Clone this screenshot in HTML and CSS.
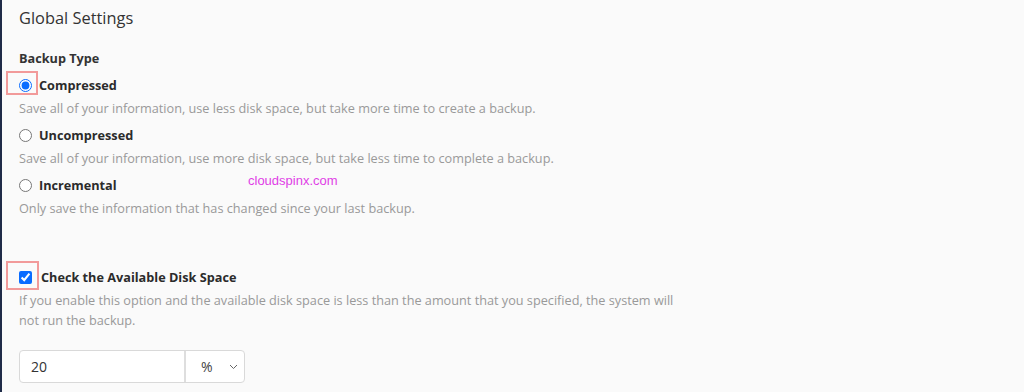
FILE: index.html
```html
<!DOCTYPE html>
<html>
<head>
<meta charset="utf-8">
<link rel="stylesheet" href="styles.css">
</head>
<body>
<div class="page">
  <h1 class="title">Global Settings</h1>
  <div class="group-label">Backup Type</div>

  <label class="opt">
    <span class="mark-box"></span>
    <input type="radio" name="bt" checked>
    <span class="opt-text">Compressed</span>
  </label>
  <div class="desc">Save all of your information, use less disk space, but take more time to create a backup.</div>

  <label class="opt">
    <input type="radio" name="bt">
    <span class="opt-text">Uncompressed</span>
  </label>
  <div class="desc">Save all of your information, use more disk space, but take less time to complete a backup.</div>

  <label class="opt">
    <input type="radio" name="bt">
    <span class="opt-text">Incremental</span>
    <span class="watermark">cloudspinx.com</span>
  </label>
  <div class="desc">Only save the information that has changed since your last backup.</div>

  <label class="opt check">
    <span class="mark-box wide"></span>
    <input type="checkbox" checked>
    <span class="opt-text">Check the Available Disk Space</span>
  </label>
  <div class="desc narrow">If you enable this option and the available disk space is less than the amount that you specified, the system will not run the backup.</div>

  <div class="input-group">
    <input class="num" type="text" value="20">
    <div class="unit">
      <span>%</span>
      <svg class="chev" width="9" height="6" viewBox="0 0 9 6"><path d="M1 1l3.5 3.5L8 1" fill="none" stroke="#666" stroke-width="1"/></svg>
    </div>
  </div>
</div>
</body>
</html>
```

FILE: styles.css
```css
html, body {
  margin: 0;
  padding: 0;
}
body {
  background: #fafafa;
  border-left: 2px solid #1f2b48;
  min-height: 392px;
  box-sizing: border-box;
  font-family: "Open Sans", "Noto Sans", sans-serif;
  color: #333;
}
.page {
  padding: 6px 0 0 17px;
}
.title {
  margin: 0;
  font-size: 16.4px;
  font-weight: 400;
  line-height: 24px;
  color: #333;
}
.group-label {
  margin-top: 18px;
  font-size: 12.7px;
  font-weight: 700;
  line-height: 20px;
  color: #333;
}
.opt {
  position: relative;
  display: flex;
  align-items: center;
  height: 24px;
  margin-top: 5px;
}
.opt input {
  margin: 0;
  width: 13px;
  height: 13px;
  accent-color: #0a6cff;
}
.opt-text {
  margin-left: 7px;
  font-size: 12.7px;
  font-weight: 700;
  color: #2b2b2b;
}
.check .opt-text {
  margin-left: 9px;
}
.mark-box {
  position: absolute;
  left: -13px;
  top: -2px;
  width: 32px;
  height: 24px;
  box-sizing: border-box;
  border: 2px solid #f29a9a;
  pointer-events: none;
}
.mark-box.wide {
  top: -4px;
  width: 33px;
  height: 29px;
}
.desc {
  font-size: 12.7px;
  line-height: 20px;
  color: #999;
  margin-top: 1px;
}
.check {
  margin-top: 47px;
}
.narrow {
  width: 670px;
}
.watermark {
  position: absolute;
  left: 229px;
  top: 0px;
  font-family: "Liberation Sans", Arial, sans-serif;
  font-size: 13px;
  color: #e03ee6;
}
.input-group {
  display: flex;
  margin-top: 20px;
  width: 226px;
  height: 33px;
  border: 1px solid #d9d9d9;
  border-radius: 4px;
  box-sizing: border-box;
  background: #fff;
}
.num {
  width: 166px;
  border: none;
  border-right: 2px solid #dedede;
  outline: none;
  padding: 0 0 0 11px;
  font-family: "Open Sans", sans-serif;
  font-size: 14px;
  color: #333;
  background: transparent;
  box-sizing: border-box;
  border-radius: 4px 0 0 4px;
}
.unit {
  flex: 1;
  display: flex;
  align-items: center;
  justify-content: space-between;
  padding: 0 6px 0 15px;
  font-size: 14px;
  color: #444;
}
.chev {
  display: block;
}
```
